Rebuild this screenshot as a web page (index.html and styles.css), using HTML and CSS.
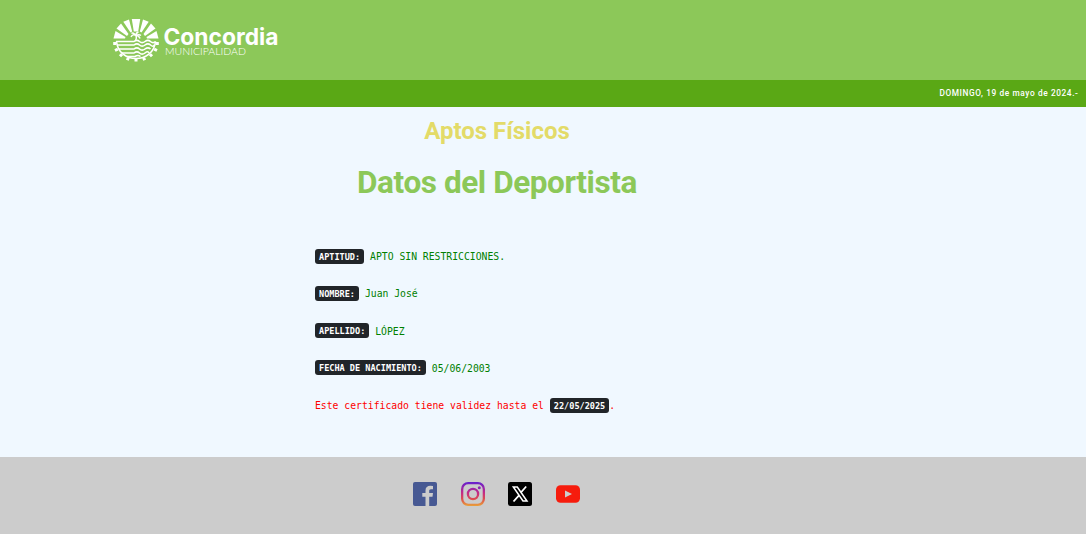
FILE: index.html
```html
<!DOCTYPE html>
<html lang="es">
<head>
<meta charset="utf-8">
<title>Aptos Físicos</title>
<link rel="stylesheet" href="styles.css">
</head>
<body>
<header class="header">
  <svg class="logo" width="168" height="48" viewBox="112 16 168 48" role="img" aria-label="Concordia Municipalidad">
    <g fill="#fff">
      <path d="M131.800 19h8.400l-2 12.500h-4.400z"/>
      <path d="M123.300 21.800l5.700-2.300 3.200 12-1.700 1z"/>
      <path d="M148.700 21.800l-5.700-2.300-3.200 12 1.700 1z"/>
      <path d="M116.500 28.500l4.500-5 7.500 10.500-1.500 2z"/>
      <path d="M155.500 28.500l-4.500-5-7.500 10.500 1.500 2z"/>
      <path d="M113.500 38.500l2-7.500 10 6-.5 1.500z"/>
      <path d="M158.500 38.500l-2-7.500-10 6 .5 1.500z"/>
    </g>
    <g fill="none" stroke="#fff">
      <path d="M136 35.500q-3-2-5 1.500M136 35.500q-3-3.500-4.500-2M136 35.500q0-3 2.500-3.500M136 35.500q3-1.500 5 0M136 35.500q3 0 4 3M136 35q1 3-.5 6" stroke-width="1.500"/>
      <path d="M116.500 41.500c1 11 10 17 19.500 17s18.500-6 19.500-17" stroke-width="1.600"/>
      <path d="M116 41.500h18q3-2.400 5.500 0t5.500 0 5.500 0 5 0M117 45h17q3-2.400 5.500 0t5.500 0 5.500 0 4 0M119 49h15q3-2.400 5.500 0t5.500 0 5.500 0M121.500 53h12.500q3-2.400 5.500 0t5.500 0 4 0M127 56.500h8q3-2 5.500 0" stroke-width="1.600"/>
      <path d="M113.200 43.500h3M115 50.500l2.800-1.300M120 56.300l2-2M127.400 60.200l.9-2.400M136 61.500v-3M144.600 60.200l-.9-2.400M152 56.300l-2-2M157 50.500l-2.800-1.300M158.800 43.500h-3" stroke-width="3"/>
    </g>
    <text class="logo-name" x="163.500" y="45" textLength="115" lengthAdjust="spacingAndGlyphs">Concordia</text>
    <text class="logo-sub" x="165" y="55" textLength="81" lengthAdjust="spacingAndGlyphs">MUNICIPALIDAD</text>
  </svg>
</header>
<div class="datebar">DOMINGO, 19 de mayo de 2024.-</div>
<main class="main">
  <h2 class="section">Aptos Físicos</h2>
  <h1 class="title">Datos del Deportista</h1>
  <div class="details">
    <p class="row"><span class="badge">APTITUD:</span> APTO SIN RESTRICCIONES.</p>
    <p class="row"><span class="badge">NOMBRE:</span> Juan José</p>
    <p class="row"><span class="badge">APELLIDO:</span> LÓPEZ</p>
    <p class="row"><span class="badge">FECHA DE NACIMIENTO:</span> 05/06/2003</p>
    <p class="row validity">Este certificado tiene validez hasta el <span class="badge">22/05/2025</span>.</p>
  </div>
</main>
<footer class="footer">
  <div class="social">
    <svg width="24" height="24" viewBox="0 0 24 24"><rect width="24" height="24" rx="2" fill="#475993"/><path d="M12.500 24v-9.300H9.300V11h3.200V8.500c0-3.200 2-4.700 4.800-4.700l2.700.1v3.300h-1.900c-1.600 0-1.900.8-1.900 1.800v2H20l-.5 3.700h-3.300V24z" fill="#ccc"/></svg>
    <svg width="24" height="24" viewBox="0 0 24 24"><defs><linearGradient id="ig" x1="0" y1="0" x2="0" y2="24" gradientUnits="userSpaceOnUse"><stop stop-color="#6420d0"/><stop offset=".45" stop-color="#c42a86"/><stop offset=".7" stop-color="#dc4b50"/><stop offset="1" stop-color="#e9a13a"/></linearGradient></defs><g fill="none" stroke="url(#ig)" stroke-width="2.300"><rect x="1.150" y="1.150" width="21.700" height="21.700" rx="6"/><circle cx="12" cy="12" r="5.100"/></g><circle cx="18.300" cy="5.700" r="1.500" fill="#8a25b4"/></svg>
    <svg width="24" height="24" viewBox="0 0 24 24"><rect width="24" height="24" rx="2.500"/><path d="M5.300 5h4L19 19h-4z" fill="none" stroke="#fff" stroke-width="1.500"/><path d="M18.200 4.500l-5.300 6M11 13.400l-5.500 6.100" stroke="#fff" stroke-width="1.800"/></svg>
    <svg width="24" height="24" viewBox="0 0 24 24"><rect y="3.300" width="24" height="17.400" rx="4.500" fill="#f61c0d"/><path d="M9 8.600v6.800l7-3.400z" fill="#ccc"/></svg>
  </div>
</footer>
</body>
</html>
```
FILE: styles.css
```css
* { box-sizing: border-box; }
body {
  margin: 0;
  height: 534px;
  display: flex;
  flex-direction: column;
  overflow: hidden;
  background: #f0f8ff;
  font-family: Roboto, sans-serif;
}
.header {
  height: 80px;
  padding: 16px 0 0 112px;
  background: #8cc859;
}
.logo { display: block; }
.logo-name { font: 700 23px Inter, sans-serif; fill: #fff; }
.logo-sub { font: 300 9.600px Lato, sans-serif; fill: #fff; }
.datebar {
  height: 27px;
  padding-right: 7.500px;
  background: #5aa815;
  color: #fff;
  font-size: 8.300px;
  font-weight: 500;
  letter-spacing: .6px;
  line-height: 27px;
  text-align: right;
}
.main { height: 350px; }
.section, .title {
  width: 994px;
  margin: 0;
  text-align: center;
  font-weight: 700;
}
.section {
  padding-top: 10px;
  font-size: 24px;
  line-height: 29px;
  color: #e3db68;
}
.title {
  padding-top: 18px;
  font-size: 31.500px;
  letter-spacing: -.42px;
  line-height: 38px;
  color: #8cc859;
}
.details {
  display: flex;
  flex-direction: column;
  gap: 17.300px;
  padding: 45px 0 0 315px;
}
.row {
  margin: 0;
  height: 20px;
  font: 9.750px/20px "DejaVu Sans Mono", monospace;
  color: #008000;
  white-space: nowrap;
}
.validity { color: #f00; }
.badge {
  display: inline-block;
  height: 15px;
  margin-top: -2px;
  padding: 0 4px;
  border-radius: 3px;
  background: #212529;
  color: #fff;
  font-size: 8.550px;
  font-weight: 700;
  line-height: 16px;
  vertical-align: middle;
}
.footer {
  flex: 1;
  padding-top: 25px;
  background: #ccc;
}
.social {
  display: flex;
  padding-left: 413px;
  gap: 24px;
}
.social svg:nth-child(3) { margin-left: -1px; }
```
